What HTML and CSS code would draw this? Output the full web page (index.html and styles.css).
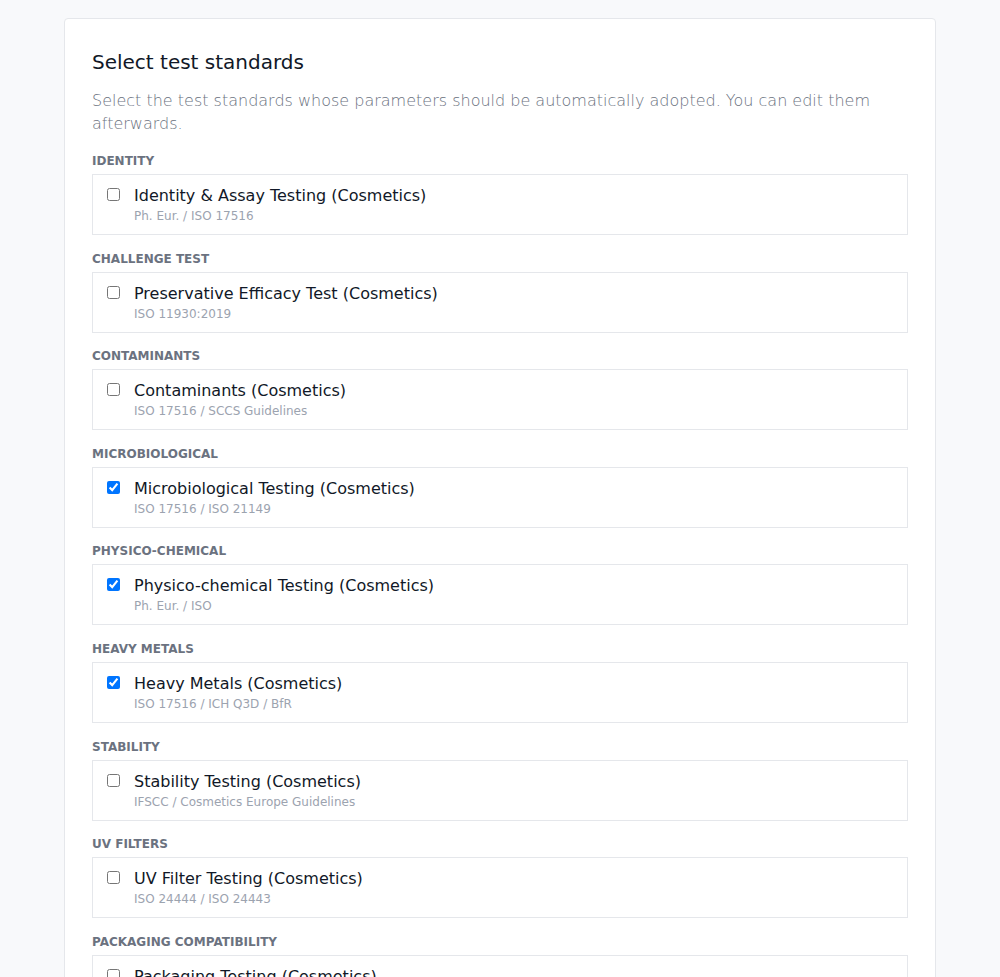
FILE: index.html
```html
<!DOCTYPE html>
<html lang="en">
<head>
  <meta charset="UTF-8" />
  <title>Select test standards</title>
  <link rel="stylesheet" href="styles.css">
</head>
<body>

<div class="card">
  <h2 class="card-title">Select test standards</h2>
  <p class="card-desc">Select the test standards whose parameters should be automatically adopted. You can edit them afterwards.</p>

  <div class="group">
    <div class="group-label">Identity</div>
    <label class="option">
      <input type="checkbox" />
      <span class="option-text">
        <span class="option-name">Identity &amp; Assay Testing (Cosmetics)</span>
        <span class="option-ref">Ph. Eur. / ISO 17516</span>
      </span>
    </label>
  </div>

  <div class="group">
    <div class="group-label">Challenge Test</div>
    <label class="option">
      <input type="checkbox" />
      <span class="option-text">
        <span class="option-name">Preservative Efficacy Test (Cosmetics)</span>
        <span class="option-ref">ISO 11930:2019</span>
      </span>
    </label>
  </div>

  <div class="group">
    <div class="group-label">Contaminants</div>
    <label class="option">
      <input type="checkbox" />
      <span class="option-text">
        <span class="option-name">Contaminants (Cosmetics)</span>
        <span class="option-ref">ISO 17516 / SCCS Guidelines</span>
      </span>
    </label>
  </div>

  <div class="group">
    <div class="group-label">Microbiological</div>
    <label class="option">
      <input type="checkbox" checked />
      <span class="option-text">
        <span class="option-name">Microbiological Testing (Cosmetics)</span>
        <span class="option-ref">ISO 17516 / ISO 21149</span>
      </span>
    </label>
  </div>

  <div class="group">
    <div class="group-label">Physico-chemical</div>
    <label class="option">
      <input type="checkbox" checked />
      <span class="option-text">
        <span class="option-name">Physico-chemical Testing (Cosmetics)</span>
        <span class="option-ref">Ph. Eur. / ISO</span>
      </span>
    </label>
  </div>

  <div class="group">
    <div class="group-label">Heavy Metals</div>
    <label class="option">
      <input type="checkbox" checked />
      <span class="option-text">
        <span class="option-name">Heavy Metals (Cosmetics)</span>
        <span class="option-ref">ISO 17516 / ICH Q3D / BfR</span>
      </span>
    </label>
  </div>

  <div class="group">
    <div class="group-label">Stability</div>
    <label class="option">
      <input type="checkbox" />
      <span class="option-text">
        <span class="option-name">Stability Testing (Cosmetics)</span>
        <span class="option-ref">IFSCC / Cosmetics Europe Guidelines</span>
      </span>
    </label>
  </div>

  <div class="group">
    <div class="group-label">UV Filters</div>
    <label class="option">
      <input type="checkbox" />
      <span class="option-text">
        <span class="option-name">UV Filter Testing (Cosmetics)</span>
        <span class="option-ref">ISO 24444 / ISO 24443</span>
      </span>
    </label>
  </div>

  <div class="group">
    <div class="group-label">Packaging Compatibility</div>
    <label class="option">
      <input type="checkbox" />
      <span class="option-text">
        <span class="option-name">Packaging Testing (Cosmetics)</span>
        <span class="option-ref">ISO 11607 / EN 13130</span>
      </span>
    </label>
  </div>
</div>

</body>
</html>
```

FILE: styles.css
```css
* {
  box-sizing: border-box;
}

body {
  font-family: 'DejaVu Sans', 'Noto Sans', sans-serif;
  background: #f8f9fb;
  margin: 0;
  padding: 18px 64px 0 64px;
  color: #111827;
}

.card {
  background: white;
  border: 1px solid #e5e7eb;
  border-radius: 4px;
  padding: 28px 27px 20px 27px;
  width: 872px;
}

.card-title {
  font-size: 20px;
  font-weight: 500;
  line-height: 30px;
  margin: 0 0 12px 0;
  color: #111827;
}

.card-desc {
  font-size: 16px;
  font-weight: 300;
  line-height: 23px;
  color: #6b7280;
  margin: 0 0 16px 0;
}

.group {
  margin-bottom: 13.6px;
}

.group-label {
  font-size: 12px;
  font-weight: 600;
  line-height: 20px;
  text-transform: uppercase;
  color: #6b7280;
  margin-bottom: 3px;
}

.option {
  display: flex;
  align-items: flex-start;
  gap: 14px;
  border: 1px solid #e5e7eb;
  padding: 10px 14px 9px 14px;
  cursor: pointer;
}

.option input {
  margin: 3px 0 0 0;
  width: 13px;
  height: 13px;
}

.option-text {
  display: flex;
  flex-direction: column;
}

.option-name {
  font-size: 16px;
  font-weight: 500;
  line-height: 22px;
  color: #111827;
}

.option-ref {
  font-size: 12px;
  line-height: 18px;
  color: #9ca3af;
}
```
